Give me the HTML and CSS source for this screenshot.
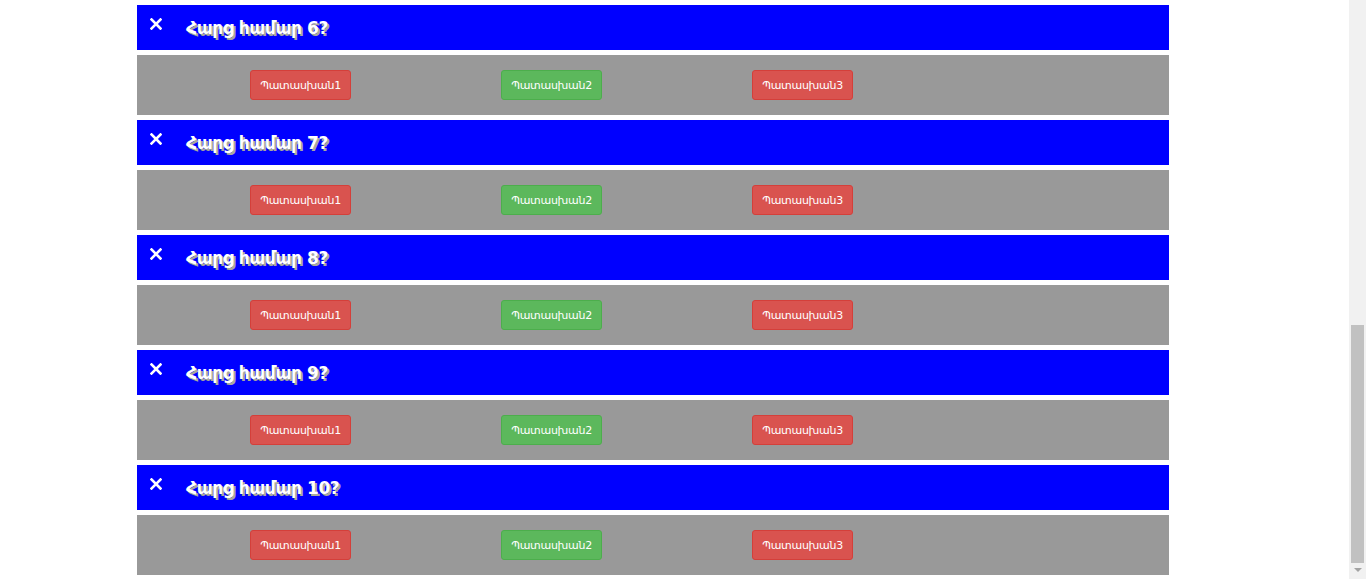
FILE: index.html
```html
<!DOCTYPE html>
<html lang="hy">
<head>
    <meta charset="UTF-8">
    <meta name="viewport" content="width=device-width, initial-scale=1.0">
    <title>Հարցաշար</title>
    <link rel="stylesheet" href="styles.css">
</head>
<body>
    <div class="page">
        <div class="quiz" id="quiz"></div>
    </div>
    <div class="scrollbar">
        <div class="scroll-thumb"></div>
        <div class="scroll-arrow"></div>
    </div>

    <script>
        // հարցերը 6-ից 10
        const quiz = document.getElementById('quiz');
        for (let i = 6; i <= 10; i++) {
            const q = document.createElement('div');
            q.className = 'question';
            q.innerHTML =
                '<div class="question-head">' +
                    '<span class="close"><svg width="12" height="12" viewBox="0 0 12 12"><path d="M1.5 1.5L10.5 10.5M10.5 1.5L1.5 10.5" stroke="#fff" stroke-width="2.6" stroke-linecap="square"/></svg></span>' +
                    '<h3 class="question-title">Հարց համար ' + i + '?</h3>' +
                '</div>' +
                '<div class="answers">' +
                    '<button class="btn btn-danger">Պատասխան1</button>' +
                    '<button class="btn btn-success">Պատասխան2</button>' +
                    '<button class="btn btn-danger">Պատասխան3</button>' +
                '</div>';
            quiz.appendChild(q);
        }
    </script>
</body>
</html>
```

FILE: styles.css
```css
* {
    margin: 0;
    padding: 0;
    box-sizing: border-box;
}

html, body {
    height: 100%;
    overflow: hidden;
}

body {
    display: flex;
    background: #fff;
    font-family: 'DejaVu Sans', 'Noto Sans', sans-serif;
}

.page {
    flex: 1;
}

.quiz {
    width: 1032px;
    margin-left: 137px;
    padding-top: 5px;
}

.question-head {
    display: flex;
    align-items: center;
    height: 45px;
    margin-bottom: 5px;
    background: #0000ff;
    color: #fff;
}

.close {
    display: flex;
    width: 12px;
    height: 12px;
    margin-left: 13px;
    margin-top: -8px;
}

.question-title {
    margin-left: 24px;
    font-size: 17px;
    font-weight: bold;
    letter-spacing: -0.4px;
    text-shadow: 2px 2px 0 #a9a99b;
}

.answers {
    display: flex;
    gap: 150px;
    height: 60px;
    margin-bottom: 5px;
    padding: 15px 0 0 113px;
    background: #999;
}

.btn {
    width: 101px;
    height: 30px;
    border: 1px solid;
    border-radius: 3px;
    color: #fff;
    font-family: inherit;
    font-size: 11px;
    letter-spacing: -0.3px;
    cursor: pointer;
}

.btn-danger {
    background: #d9534f;
    border-color: #d43f3a;
}

.btn-success {
    background: #5cb85c;
    border-color: #4cae4c;
}

/* полоса прокрутки как на скриншоте */
.scrollbar {
    display: flex;
    flex-direction: column;
    align-items: center;
    width: 17px;
    padding-top: 325px;
    background: #f1f1f1;
}

.scroll-thumb {
    width: 13px;
    height: 238px;
    background: #c1c1c1;
}

.scroll-arrow {
    margin-top: 5px;
    border-left: 4px solid transparent;
    border-right: 4px solid transparent;
    border-top: 4px solid #a3a3a3;
}
```
